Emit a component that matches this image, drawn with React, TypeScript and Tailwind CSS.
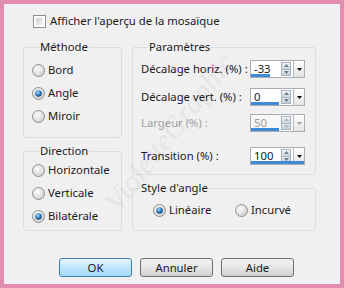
const font = "font-['Noto_Sans','Open_Sans',sans-serif]";

function Radio({ checked }: { checked?: boolean }) {
  return (
    <svg width="13" height="13" viewBox="0 0 13 13" className="shrink-0">
      <defs>
        <radialGradient id="rg-off" cx="40%" cy="35%" r="70%">
          <stop offset="0%" stopColor="#fbfbfb" />
          <stop offset="100%" stopColor="#cfcfcf" />
        </radialGradient>
        <radialGradient id="rg-dot" cx="40%" cy="35%" r="70%">
          <stop offset="0%" stopColor="#a8dcfb" />
          <stop offset="60%" stopColor="#2878b8" />
          <stop offset="100%" stopColor="#0d3f6e" />
        </radialGradient>
      </defs>
      <circle cx="6.5" cy="6.5" r="6" fill="url(#rg-off)" stroke="#8e8f8f" />
      {checked && <circle cx="6.5" cy="6.5" r="3.3" fill="url(#rg-dot)" />}
    </svg>
  );
}

function RadioRow({ label, checked }: { label: string; checked?: boolean }) {
  return (
    <div className="h-[22px] flex items-center gap-[3px] whitespace-nowrap">
      <Radio checked={checked} />
      <span>{label}</span>
    </div>
  );
}

function Group({ title, className, children }: { title: string; className: string; children: React.ReactNode }) {
  return (
    <fieldset className={`border border-[#d5dfe5] rounded-[3px] ${className}`}>
      <legend className="ml-[7px] px-[1px] leading-[16px]">{title}</legend>
      {children}
    </fieldset>
  );
}

function Spinner({ value, bar, disabled }: { value: string; bar: string; disabled?: boolean }) {
  return (
    <div
      className={`relative w-[55px] h-[18px] shrink-0 border border-[#abadb3] flex items-stretch ${
        disabled ? 'bg-[#f7f7f7] text-[#9a9a9a]' : 'bg-white'
      }`}
    >
      <div className="flex-1 pl-[3px] leading-[16px]">{value}</div>
      {/* up / down */}
      <div className="w-[10px] my-[1px] flex flex-col">
        <div className="flex-1 border border-[#a7b4c0] bg-gradient-to-b from-[#f2f5f8] to-[#cfd9e2] flex items-center justify-center">
          <svg width="5" height="3" viewBox="0 0 5 3">
            <path d="M0 3 L2.5 0 L5 3 Z" fill={disabled ? '#b8b8b8' : '#6c7d8c'} />
          </svg>
        </div>
        <div className="flex-1 border border-t-0 border-[#a7b4c0] bg-gradient-to-b from-[#e6ecf1] to-[#c3cfda] flex items-center justify-center">
          <svg width="5" height="3" viewBox="0 0 5 3">
            <path d="M0 0 L2.5 3 L5 0 Z" fill={disabled ? '#b8b8b8' : '#6c7d8c'} />
          </svg>
        </div>
      </div>
      {/* dropdown */}
      <div className="w-[11px] ml-[2px] border-l border-[#b9b9b9] bg-gradient-to-b from-[#ffffff] to-[#e3e3e3] flex items-center justify-center">
        <svg width="5" height="3" viewBox="0 0 5 3">
          <path d="M0 0 L2.5 3 L5 0 Z" fill={disabled ? '#a0a0a0' : '#000'} />
        </svg>
      </div>
      <div className="absolute left-0 bottom-0 h-[3px] bg-[#3e8ad6]" style={{ width: bar }} />
    </div>
  );
}

function SpinRow({ label, value, bar, disabled, className }: { label: string; value: string; bar: string; disabled?: boolean; className?: string }) {
  return (
    <div className={`h-[18px] flex items-center ${className ?? ''}`}>
      <span className={`w-[109px] whitespace-nowrap ${disabled ? 'text-[#a0a0a0]' : ''}`}>{label}</span>
      <Spinner value={value} bar={bar} disabled={disabled} />
    </div>
  );
}

function Button({ label, primary }: { label: string; primary?: boolean }) {
  return (
    <div
      className={`w-[73px] h-[19px] rounded-[3px] border flex items-center justify-center leading-none ${
        primary
          ? 'border-[#3c7fb1] bg-gradient-to-b from-[#eaf6fd] via-[#bee6fd] to-[#a7d9f5]'
          : 'border-[#707070] bg-gradient-to-b from-[#f2f2f2] via-[#e6e6e6] to-[#d0d0d0]'
      }`}
    >
      {label}
    </div>
  );
}

export default function App() {
  return (
    <div className={`${font} relative w-[344px] h-[288px] border-4 border-[#e38db0] bg-[#f0f0f0] text-[11.3px] leading-[16px] text-[#1a1a1a] overflow-hidden`}>
      {/* checkbox */}
      <div className="ml-[29px] mt-[10px] h-[14px] flex items-center gap-[4px]">
        <div className="w-[13px] h-[13px] border border-[#8e8f8f] bg-white p-[2px]">
          <div className="w-full h-full bg-gradient-to-br from-[#cbcfd5] to-[#f6f6f6]" />
        </div>
        <span>Afficher l'aperçu de la mosaïque</span>
      </div>

      <div className="ml-[19px] mt-[11px] h-[193px] flex gap-[10px]">
        {/* left column */}
        <div className="w-[99px] flex flex-col gap-[5px]">
          <Group title="Méthode" className="h-[99px] pl-[8px] pt-[4px]">
            <div className="flex flex-col gap-px">
              <RadioRow label="Bord" />
              <RadioRow label="Angle" checked />
              <RadioRow label="Miroir" />
            </div>
          </Group>
          <Group title="Direction" className="h-[88px] pl-[8px]">
            <div className="flex flex-col gap-px">
              <RadioRow label="Horizontale" />
              <RadioRow label="Verticale" />
              <RadioRow label="Bilatérale" checked />
            </div>
          </Group>
        </div>

        {/* right column */}
        <div className="w-[184px] flex flex-col gap-[5px]">
          <Group title="Paramètres" className="h-[136px] pl-[8px] pt-[5px]">
            <SpinRow label="Décalage horiz. (%) :" value="-33" bar="19px" />
            <SpinRow label="Décalage vert. (%) :" value="0" bar="28px" className="mt-[10px]" />
            <SpinRow label="Largeur (%) :" value="50" bar="28px" disabled className="mt-[8px]" />
            <SpinRow label="Transition (%) :" value="100" bar="100%" className="mt-[15px]" />
          </Group>
          <Group title="Style d'angle" className="h-[51px] pt-[3px]">
            <div className="flex">
              <div className="ml-[20px] w-[82px]">
                <RadioRow label="Linéaire" checked />
              </div>
              <RadioRow label="Incurvé" />
            </div>
          </Group>
        </div>
      </div>

      {/* buttons */}
      <div className="ml-[55px] mt-[26px] flex gap-[8px]">
        <Button label="OK" primary />
        <Button label="Annuler" />
        <Button label="Aide" />
      </div>

      {/* watermark */}
      <div className="pointer-events-none absolute left-[70px] top-[120px] -rotate-[52deg] font-['Liberation_Serif',serif] italic text-[30px] text-[#000] opacity-[0.045] whitespace-nowrap">
        VioletteGraphic
      </div>
    </div>
  );
}
